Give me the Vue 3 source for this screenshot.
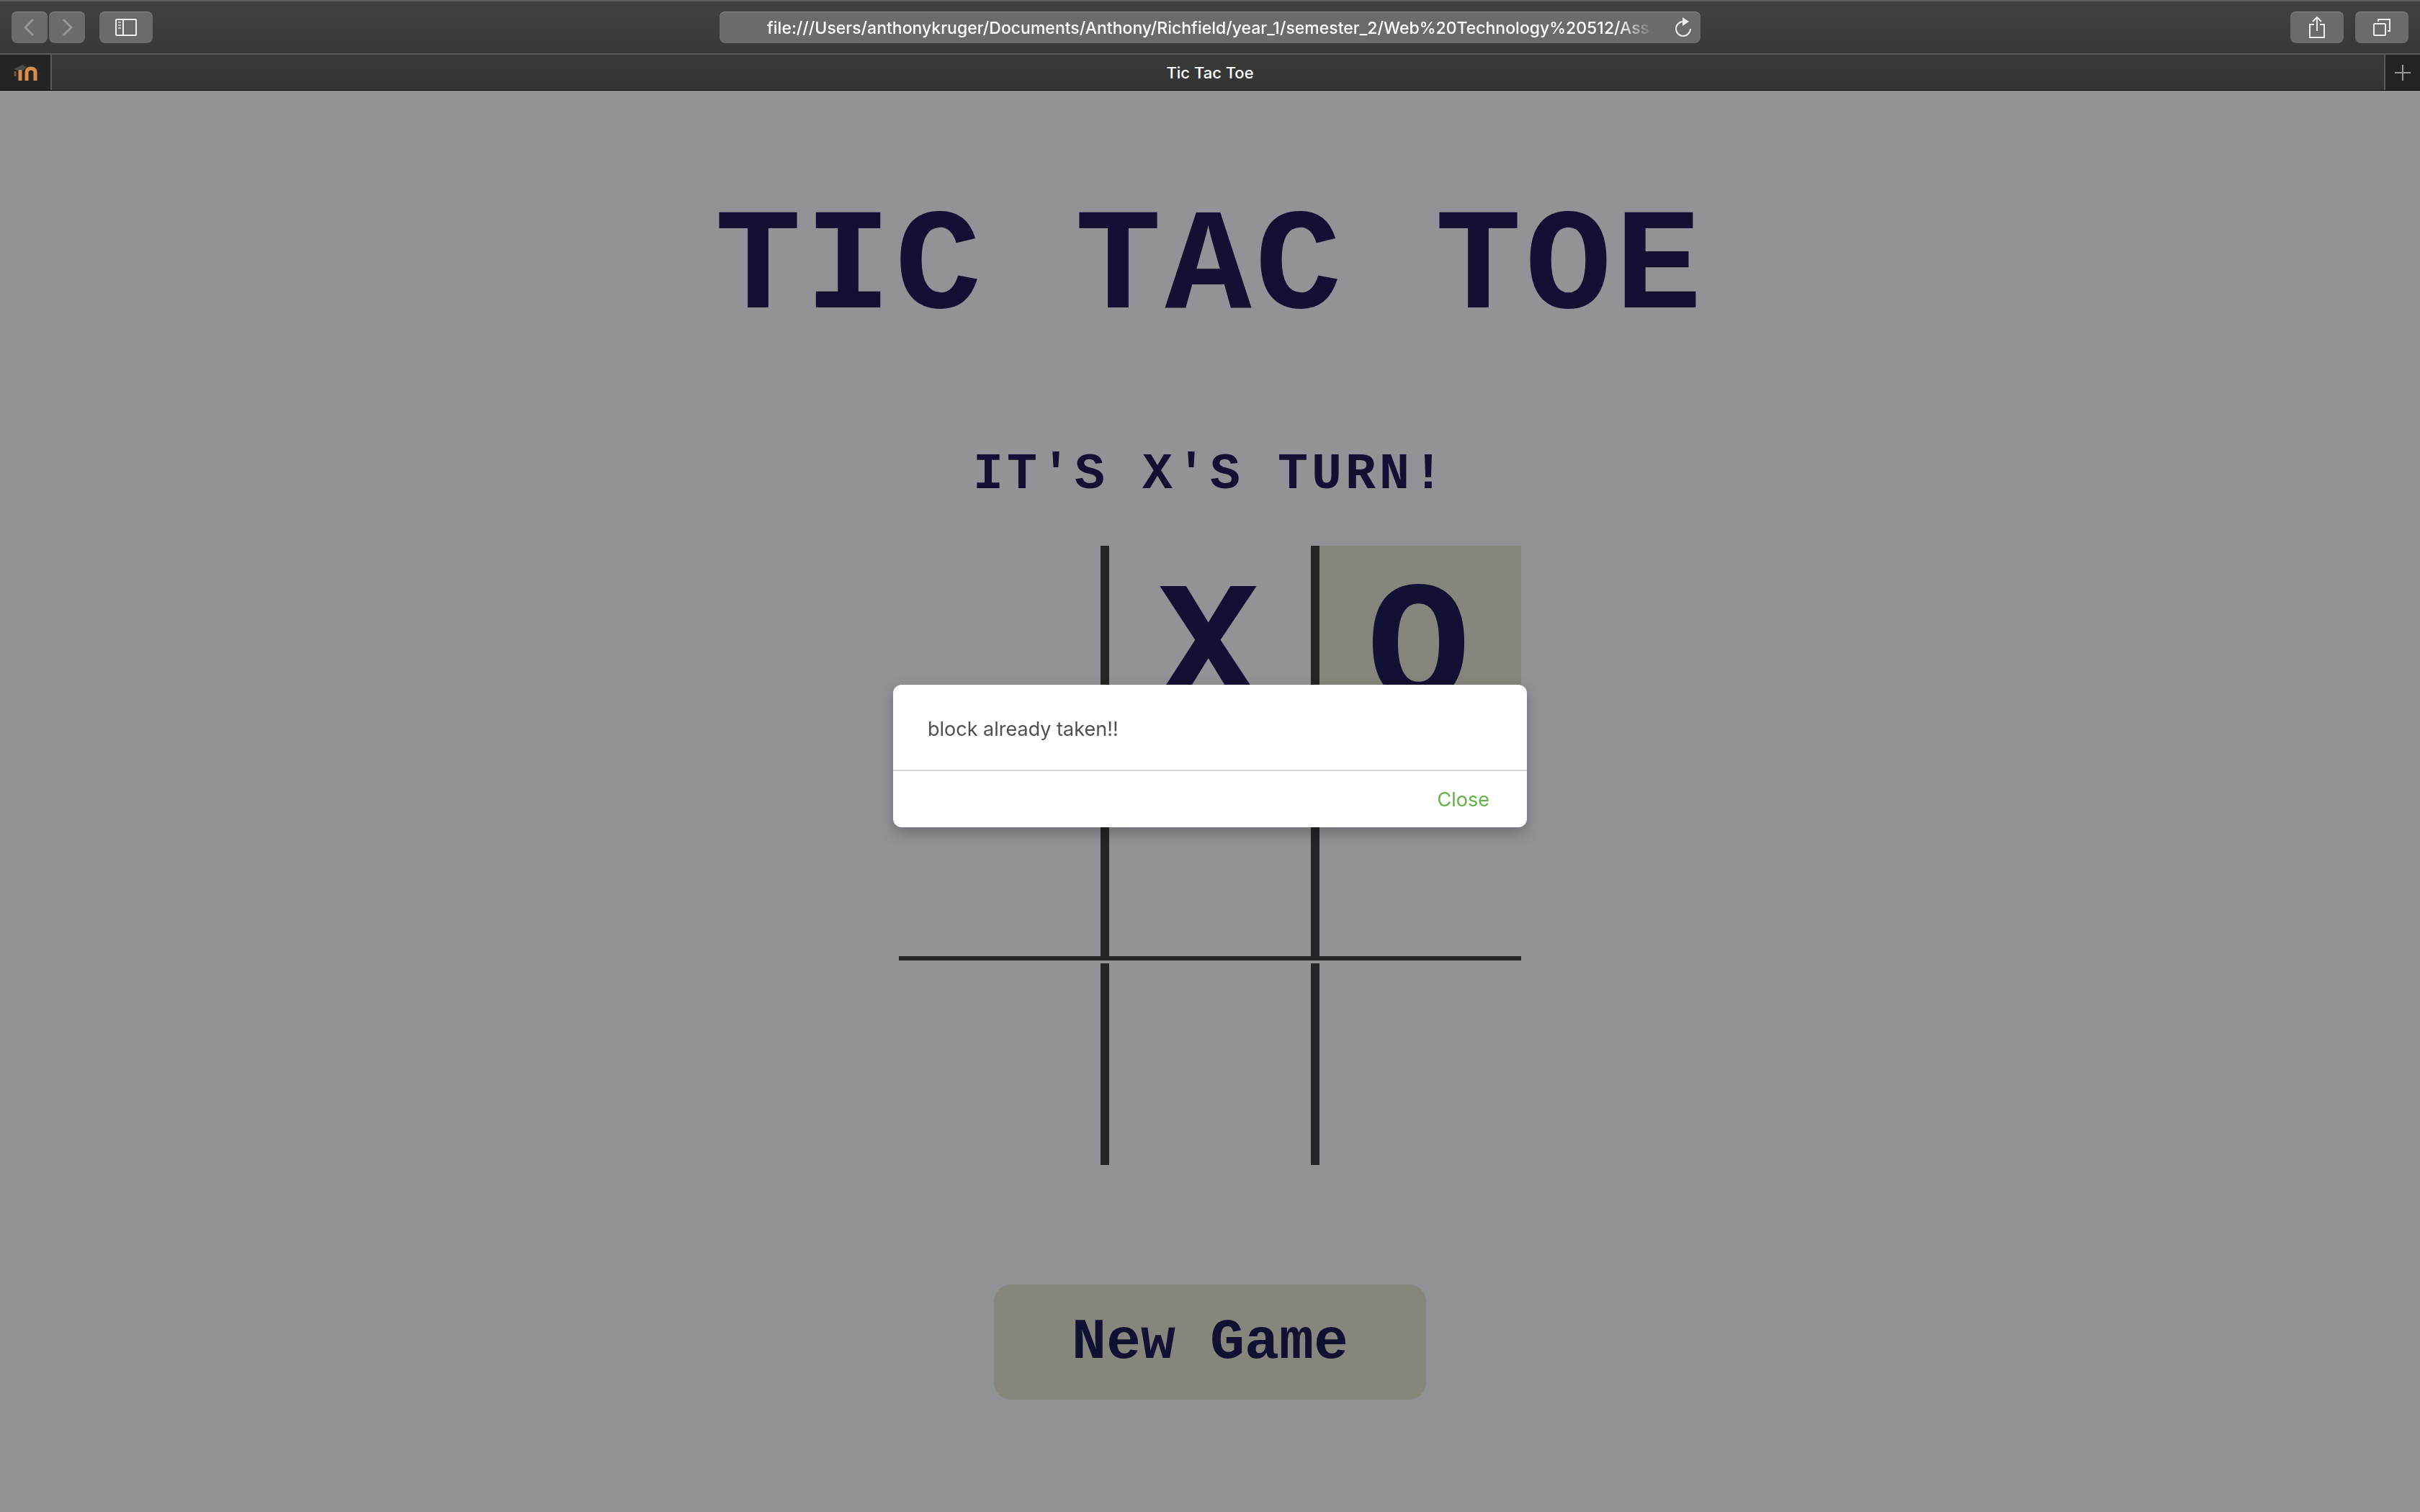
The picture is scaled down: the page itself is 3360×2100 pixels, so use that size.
<script setup>
import { ref } from 'vue'

const url = ref('file:///Users/anthonykruger/Documents/Anthony/Richfield/year_1/semester_2/Web%20Technology%20512/Ass')
const cells = ref(['', 'X', 'O', '', '', '', '', '', ''])
const hovered = 2
</script>

<template>
  <div class="window">
    <header class="chrome">
      <div class="toolbar">
        <div class="side">
          <div class="pair">
            <button class="tool nav" type="button" aria-label="Back">
              <svg width="16" height="26" viewBox="0 0 16 26"><path d="M13 2 2 13l11 11" /></svg>
            </button>
            <button class="tool nav" type="button" aria-label="Forward">
              <svg width="16" height="26" viewBox="0 0 16 26"><path d="M3 2l11 11L3 24" /></svg>
            </button>
          </div>
          <button class="tool" type="button" aria-label="Show sidebar">
            <svg width="30" height="24" viewBox="0 0 30 24">
              <rect x="1" y="1" width="28" height="22" rx="1" />
              <path d="M11 1v22" />
              <path class="faint" d="M4 5h4M4 9h4M4 13h4" />
            </svg>
          </button>
        </div>
        <div class="address">
          <input v-model="url" class="url" type="text" aria-label="Address" spellcheck="false" />
          <button class="reload" type="button" aria-label="Reload">
            <svg width="24" height="28" viewBox="0 0 24 28">
              <path d="M12 6A10 10 0 1 0 22 16" />
              <path class="solid" d="M11 0v12l9-6z" />
            </svg>
          </button>
        </div>
        <div class="side end">
          <button class="tool" type="button" aria-label="Share">
            <svg width="24" height="32" viewBox="0 0 24 32">
              <path d="M8 12H2v18h20V12h-6M12 21V3M6 8l6-6 6 6" />
            </svg>
          </button>
          <button class="tool" type="button" aria-label="Show all tabs">
            <svg width="26" height="26" viewBox="0 0 26 26">
              <rect x="2" y="8" width="16" height="16" rx="1" />
              <path d="M8 5V2h16v16h-3" />
            </svg>
          </button>
        </div>
      </div>
      <div class="tabs">
        <button class="pinned" type="button" aria-label="Pinned tab">
          <svg width="34" height="26" viewBox="0 0 34 26">
            <path class="leg" d="M10 24V9M19 24V13q0-6 6-6t6 6v11" />
            <path class="tassel" d="M3 11v7" />
            <path class="cap" d="M1 8 13 2l6 3-5 5q-4-2-8 0z" />
          </svg>
        </button>
        <button class="tab" type="button">Tic Tac Toe</button>
        <button class="add" type="button" aria-label="New tab">
          <svg width="22" height="22" viewBox="0 0 22 22"><path d="M11 0v22M0 11h22" /></svg>
        </button>
      </div>
    </header>

    <main class="game">
      <h1>TIC TAC TOE</h1>
      <h2>IT'S X'S TURN!</h2>
      <div class="board">
        <button
          v-for="(mark, i) in cells"
          :key="i"
          type="button"
          :aria-label="`Block ${i + 1}`"
          :class="['cell', { right: i % 3 < 2, bottom: i < 6, hovered: i === hovered }]"
        >{{ mark }}</button>
      </div>
      <button class="new-game" type="button">New Game</button>
    </main>

    <div class="overlay">
      <div class="dialog" role="alertdialog" aria-modal="true" aria-labelledby="message">
        <p id="message">block already taken!!</p>
        <footer>
          <button class="close" type="button">Close</button>
        </footer>
      </div>
    </div>
  </div>
</template>

<style>
body {
  margin: 0;
  background: #929397;
}
</style>

<style scoped>
.window {
  display: flex;
  flex-direction: column;
  min-height: 100vh;
  background: #929397;
}

button,
input {
  margin: 0;
  padding: 0;
  border: 0;
  background: none;
  color: inherit;
  font: inherit;
}

svg {
  display: block;
  fill: none;
  stroke: #ededed;
  stroke-width: 2;
}

/* Browser chrome */
.chrome {
  border-bottom: 1px solid #050505;
  color: #fff;
  font-family: Inter, "Liberation Sans", sans-serif;
  font-weight: 500;
}

.toolbar {
  display: flex;
  align-items: center;
  justify-content: space-between;
  box-sizing: border-box;
  height: 76px;
  padding: 0 16px;
  border-top: 2px solid #5e5e5e;
  border-bottom: 2px solid #5a5a5a;
  background: linear-gradient(#414141, #383838);
}

.side {
  display: flex;
  flex: 1;
  gap: 20px;
}

.end {
  justify-content: flex-end;
  gap: 16px;
}

.pair {
  display: flex;
  gap: 2px;
}

.tool {
  display: grid;
  place-items: center;
  width: 74px;
  height: 44px;
  border-radius: 8px;
  background: #6b6b6b;
  box-shadow: inset 0 1px #868686;
}

.nav {
  width: 50px;
}

.nav svg {
  stroke: #989898;
  stroke-width: 3;
}

.faint {
  stroke: #c4c4c4;
}

.address {
  display: flex;
  align-items: center;
  box-sizing: border-box;
  width: 1362px;
  height: 44px;
  padding: 0 12px 0 66px;
  border-radius: 8px;
  background: #6b6b6b;
  box-shadow: inset 0 1px #868686;
}

.url {
  flex: 1;
  min-width: 0;
  box-sizing: border-box;
  height: 44px;
  padding-top: 2px;
  font-size: 23px;
  -webkit-mask-image: linear-gradient(to left, transparent, #000 52px);
  mask-image: linear-gradient(to left, transparent, #000 52px);
}

.reload {
  margin-left: 28px;
}

.solid {
  fill: #ededed;
  stroke: none;
}

.tabs {
  display: flex;
  height: 49px;
  background: linear-gradient(#393939, #343434);
  font-size: 22px;
}

.pinned,
.add {
  display: grid;
  place-items: center;
  box-sizing: border-box;
  background: #242424;
}

.pinned {
  width: 72px;
  border-right: 2px solid #5a5a5a;
}

.add {
  width: 50px;
  border-left: 2px solid #5a5a5a;
}

.add svg {
  stroke: #9a9a9a;
}

.tab {
  flex: 1;
  padding-right: 22px;
}

.leg {
  stroke: #d98d4b;
  stroke-width: 5;
}

.tassel {
  stroke: #7a5238;
  stroke-width: 3;
}

.cap {
  fill: #4a4848;
  stroke: none;
}

/* Game */
.game {
  display: flex;
  flex: 1;
  flex-direction: column;
  align-items: center;
  color: #131133;
  font-family: "Liberation Mono", "Courier New", monospace;
  font-weight: 700;
}

h1,
h2 {
  margin: 0;
  font-weight: 700;
  letter-spacing: 5px;
}

h1 {
  padding-top: 134px;
  font-size: 200px;
  line-height: 228px;
}

h2 {
  padding-top: 132px;
  font-size: 70px;
  line-height: 80px;
}

.board {
  display: grid;
  grid-template-columns: 292px 292px 280px;
  grid-template-rows: 286px 286px 280px;
  row-gap: 4px;
  margin-top: 58px;
}

.cell {
  padding-top: 20px;
  font-size: 240px;
  line-height: 260px;
  letter-spacing: 5px;
}

.right {
  border-right: 12px solid #252525;
}

.bottom {
  border-bottom: 6px solid #252525;
}

.hovered {
  background: #86867d;
}

.new-game {
  width: 600px;
  height: 160px;
  margin: 166px 0 156px;
  border-radius: 24px;
  background: #86867d;
  font-size: 80px;
}

/* Dialog */
.overlay {
  position: fixed;
  inset: 0;
  display: grid;
  place-items: center;
}

.dialog {
  width: 880px;
  border-radius: 12px;
  background: #fff;
  box-shadow: 0 8px 20px rgba(0, 0, 0, 0.25);
  font-family: Inter, "Liberation Sans", sans-serif;
  font-size: 27px;
  line-height: 34px;
}

.dialog p {
  margin: 0;
  padding: 45px 48px 39px;
  color: #4f4f4f;
}

.dialog footer {
  display: flex;
  justify-content: flex-end;
  padding: 0 52px 0 48px;
  border-top: 2px solid #d4d4d4;
}

.close {
  height: 78px;
  padding-top: 2px;
  color: #62b245;
}
</style>
